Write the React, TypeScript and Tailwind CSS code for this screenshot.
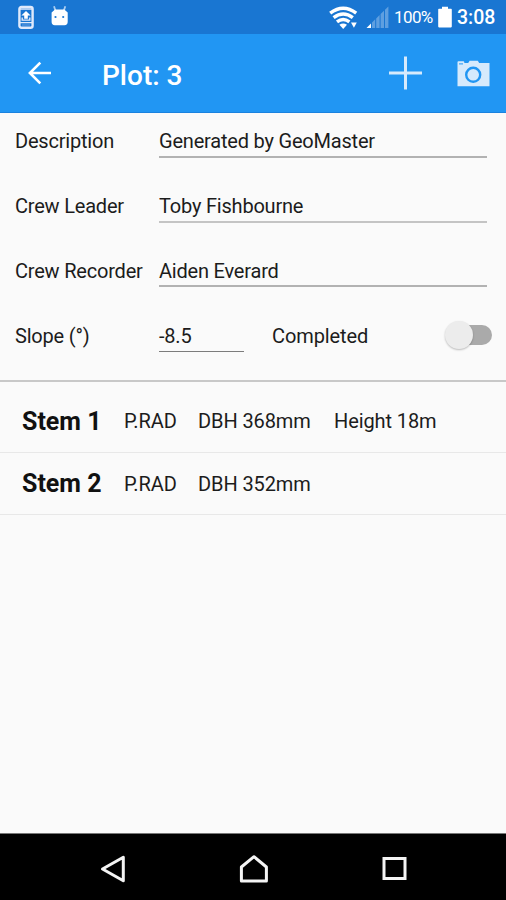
import { useState } from "react";

const fields = [
  { label: "Description", value: "Generated by GeoMaster", line: "border-[#b2b2b2]", leading: "leading-[31px]" },
  { label: "Crew Leader", value: "Toby Fishbourne", line: "border-[#c4c4c4]", leading: "leading-[31px]" },
  { label: "Crew Recorder", value: "Aiden Everard", line: "border-[#b2b2b2]", leading: "leading-[32px]" },
];

const stems = [
  { name: "Stem 1", code: "P.RAD", dbh: "DBH 368mm", height: "Height 18m", size: "h-[71px] pt-[8px]" },
  { name: "Stem 2", code: "P.RAD", dbh: "DBH 352mm", height: "", size: "h-[62px]" },
];

function StatusBar() {
  return (
    <div className="flex h-[34px] shrink-0 items-center bg-[#1976d2] text-white">
      <svg className="ml-[18px] h-6 w-4" viewBox="0 0 16 24" fill="none">
        <rect x="1.4" y="1.9" width="13.2" height="20.8" rx="2" fill="#1976d2" stroke="#dfe9fb" strokeWidth="2.4" />
        <path d="M2 4h12M2 17.6h12" stroke="#dfe9fb" strokeWidth="1.4" />
        <path d="M8 6l4.6 4.6H9.8v3.2H6.2v-3.2H3.4z" fill="#fff" />
        <path d="M4.2 12.5v2.6h7.6v-2.6" stroke="#dfe9fb" strokeWidth="1.4" />
        <path d="M4 20h8" stroke="#6f9fe0" strokeWidth="1" />
      </svg>
      <svg className="ml-4 h-6 w-5" viewBox="0 0 20 24">
        <path d="M4 1.2l1.4 4.4M15.3 1.2l-1.4 4.4" stroke="#a9cdf1" strokeWidth="1.8" />
        <path d="M1.6 7.4L5 4.6h9.3l3.4 2.8v9.4q0 3.4-3.2 3.4H4.8q-3.2 0-3.2-3.4z" fill="#fff" />
        <circle cx="5.5" cy="12" r="1.1" fill="#1976d2" />
        <circle cx="13.2" cy="12" r="1.1" fill="#1976d2" />
      </svg>

      <svg className="ml-auto h-6 w-[29px]" viewBox="0 0 29 24" fill="none">
        <path
          d="M1.2 8.2Q14.2-1.8 27.2 8.2M4.6 12.6q9.6-7.4 19.2 0M8 16.8q6.2-4.8 12.4 0"
          stroke="#fff"
          strokeWidth="3.4"
        />
        <path d="M10.4 19.8q3.8-2.6 7.6 0l-3.8 4.2z" fill="#fff" />
        <path d="M22 17.6h5.8l-2.9 5.2z" fill="#fff" />
      </svg>
      <svg className="ml-2 h-6 w-[23px]" viewBox="0 0 23 24">
        <path d="M.5 23L5 18.5V23z" fill="#fff" />
        <path
          d="M6 17.5l3.2-3.2V23H6zM10.2 13.4l3.4-3.4v13h-3.4zM14.6 9.1L18 5.7V23h-3.4zM19 4.8l3.4-3.4V23H19z"
          fill="#5e9fe0"
        />
      </svg>
      <span className="ml-[5px] w-[40px] whitespace-nowrap pt-[2px] text-[17px] tracking-[-0.6px]">100%</span>
      <svg className="ml-1 h-6 w-[14px]" viewBox="0 0 14 24">
        <path d="M4 1.8h6v2h3q.8 0 .8.8v17q0 .8-.8.8H1q-.8 0-.8-.8v-17q0-.8.8-.8h3z" fill="#fff" />
      </svg>
      <span className="ml-[5px] mr-[11px] w-[38px] whitespace-nowrap pt-[2px] text-[19.5px] font-medium">3:08</span>
    </div>
  );
}

function Toolbar() {
  return (
    <header className="flex h-[79px] shrink-0 items-center border-b border-[#1a82df] bg-[#2196f3] text-white">
      <button type="button" aria-label="Back" className="ml-7">
        <svg className="h-6 w-6" viewBox="0 0 24 24" fill="none" stroke="currentColor" strokeWidth="2.6">
          <path d="M23 12H2M12.3 1.6L1.9 12l10.4 10.4" />
        </svg>
      </button>
      <h1 className="ml-[50px] pt-[5px] text-[28px] font-medium leading-8">Plot: 3</h1>
      <button type="button" aria-label="Add stem" className="ml-auto">
        <svg className="h-[34px] w-[34px]" viewBox="0 0 34 34" stroke="#d6eafc" strokeWidth="3">
          <path d="M16.5 .5v33M0 17h33" />
        </svg>
      </button>
      <button type="button" aria-label="Take photo" className="ml-[34px] mr-4 pt-[2px]">
        <svg className="h-7 w-[33px]" viewBox="0 0 33 28">
          <path d="M.5 4.5V2.2q0-.9.9-.9h5q.9 0 .9.9v.9h3.9L12.6.7h8.2l1.4 2.4h10.3v23.2H.5z" fill="#d6eafc" />
          <path d="M2 3.9h4" stroke="#2196f3" strokeWidth="1" />
          <circle cx="16.2" cy="14.8" r="7" fill="none" stroke="#2196f3" strokeWidth="2.4" />
        </svg>
      </button>
    </header>
  );
}

export default function App() {
  const [completed, setCompleted] = useState(false);

  return (
    <div className="flex h-[900px] w-[506px] flex-col overflow-hidden bg-[#fafafa] font-[Roboto,sans-serif] text-[20px] text-[#1c1c1c]">
      <StatusBar />
      <Toolbar />

      <main className="flex-1">
        <section className="h-[269px] border-b-2 border-[#c8c8c8] pt-[13px] tracking-[-0.2px]">
          {fields.map((field) => (
            <div key={field.label} className={`mb-[32.7px] flex h-8 pl-[15px] pr-[19px] ${field.leading}`}>
              <span className="w-36 shrink-0 whitespace-nowrap">{field.label}</span>
              <span className={`flex-1 border-b-2 ${field.line}`}>{field.value}</span>
            </div>
          ))}
          <div className="flex h-8 pl-[15px] pr-[14px] leading-8">
            <span className="w-36 shrink-0">Slope (°)</span>
            <span className="h-[32px] w-[85px] border-b border-[#7c7c7c]">-8.5</span>
            <span className="ml-[28px] tracking-[-0.1px]">Completed</span>
            <button
              type="button"
              role="switch"
              aria-checked={completed}
              aria-label="Completed"
              onClick={() => setCompleted((c) => !c)}
              className="ml-auto flex h-[30px] w-[47px] items-center"
            >
              <span className="ml-1 flex h-5 w-[43px] items-center rounded-full bg-[#aaaaaa]">
                <span
                  className={`h-7 w-7 shrink-0 rounded-full bg-[#ececec] shadow-[0_1px_2px_rgba(0,0,0,0.25)] ${
                    completed ? "ml-[15px]" : "-ml-1"
                  }`}
                />
              </span>
            </button>
          </div>
        </section>

        <ul>
          {stems.map((stem) => (
            <li key={stem.name} className={`flex items-center border-b border-[#e8e8e8] pl-[22px] ${stem.size}`}>
              <span className="w-[102px] pt-px text-[25px] font-bold text-[#111111]">{stem.name}</span>
              <span className="w-[74px] tracking-[-0.1px]">{stem.code}</span>
              <span className="w-[136px] tracking-[-0.1px]">{stem.dbh}</span>
              <span className="tracking-[-0.1px]">{stem.height}</span>
            </li>
          ))}
        </ul>
      </main>

      <nav className="flex h-[67px] shrink-0 items-center border-t border-[#777777] bg-black pt-[3px]">
        <svg className="ml-[100px] h-7 w-7" viewBox="0 0 28 28" fill="none" stroke="#f4f4f4" strokeWidth="3">
          <path d="M2.5 14L23.3 2.2v23.6z" strokeLinejoin="round" />
        </svg>
        <svg className="ml-[111px] h-7 w-[30px]" viewBox="0 0 30 28" fill="none" stroke="#f4f4f4" strokeWidth="3">
          <path d="M2.4 12L15 1.7 27.4 12v14H2.4z" strokeLinejoin="round" />
        </svg>
        <svg className="ml-[112px] h-7 w-7" viewBox="0 0 28 28" fill="none" stroke="#f4f4f4" strokeWidth="3">
          <rect x="3" y="3.5" width="21" height="20" />
        </svg>
      </nav>
    </div>
  );
}
